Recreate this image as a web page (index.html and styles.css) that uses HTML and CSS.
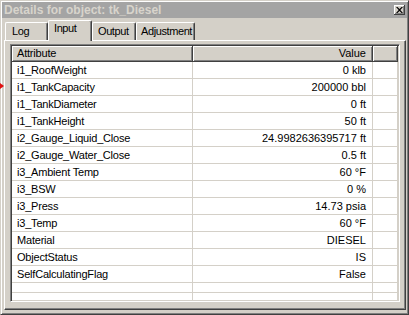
FILE: index.html
```html
<!DOCTYPE html>
<html lang="en">
<head>
  <meta charset="UTF-8">
  <title>Details for object: tk_Diesel</title>
  <link rel="stylesheet" href="styles.css">
</head>
<body>
  <div class="window">
    <!-- Title bar -->
    <div class="titlebar">
      <span class="title">Details for object: tk_Diesel</span>
      <div class="close">
        <svg width="7" height="6" viewBox="0 0 7 6">
          <path d="M0 0h1.5l2 2 2-2H7L4.3 3 7 6H5.5l-2-2-2 2H0l2.7-3z" fill="#000"/>
        </svg>
      </div>
    </div>

    <!-- Tabs -->
    <div class="tabs">
      <div class="tab tab-log">Log</div>
      <div class="tab tab-input active">Input</div>
      <div class="tab tab-output">Output</div>
      <div class="tab tab-adjust">Adjustment</div>
    </div>

    <!-- Tab page -->
    <div class="panel">
      <div class="grid">
        <div class="row head">
          <div class="cell">Attribute</div>
          <div class="cell value">Value</div>
          <div class="cell"></div>
        </div>
        <div class="row"><div class="cell">i1_RoofWeight</div><div class="cell value">0 klb</div><div class="cell"></div></div>
        <div class="row"><div class="cell">i1_TankCapacity</div><div class="cell value">200000 bbl</div><div class="cell"></div></div>
        <div class="row"><div class="cell">i1_TankDiameter</div><div class="cell value">0 ft</div><div class="cell"></div></div>
        <div class="row"><div class="cell">i1_TankHeight</div><div class="cell value">50 ft</div><div class="cell"></div></div>
        <div class="row"><div class="cell">i2_Gauge_Liquid_Close</div><div class="cell value">24.9982636395717 ft</div><div class="cell"></div></div>
        <div class="row"><div class="cell">i2_Gauge_Water_Close</div><div class="cell value">0.5 ft</div><div class="cell"></div></div>
        <div class="row"><div class="cell">i3_Ambient Temp</div><div class="cell value">60 °F</div><div class="cell"></div></div>
        <div class="row"><div class="cell">i3_BSW</div><div class="cell value">0 %</div><div class="cell"></div></div>
        <div class="row"><div class="cell">i3_Press</div><div class="cell value">14.73 psia</div><div class="cell"></div></div>
        <div class="row"><div class="cell">i3_Temp</div><div class="cell value">60 °F</div><div class="cell"></div></div>
        <div class="row"><div class="cell">Material</div><div class="cell value">DIESEL</div><div class="cell"></div></div>
        <div class="row"><div class="cell">ObjectStatus</div><div class="cell value">IS</div><div class="cell"></div></div>
        <div class="row"><div class="cell">SelfCalculatingFlag</div><div class="cell value">False</div><div class="cell"></div></div>
        <div class="row short"><div class="cell"></div><div class="cell value"></div><div class="cell"></div></div>
        <div class="row rest"><div class="cell"></div><div class="cell value"></div><div class="cell"></div></div>
      </div>
    </div>
  </div>

  <!-- marker from the window behind -->
  <span class="marker"></span>
</body>
</html>
```

FILE: styles.css
```css
* {
  margin: 0;
  padding: 0;
  box-sizing: border-box;
}

body {
  background: #d4d0c8;
  font-family: "Liberation Sans", Arial, sans-serif;
  font-size: 11px;
  color: #000;
}

/* Window frame */
.window {
  width: 409px;
  height: 315px;
  background: #d4d0c8;
  border-top: 1px solid #d4d0c8;
  border-left: 1px solid #d4d0c8;
  border-right: 1px solid #404040;
  border-bottom: 1px solid #404040;
  box-shadow: inset 1px 1px #ffffff, inset -1px -1px #808080;
  padding: 1px;
  display: flex;
  flex-direction: column;
}

/* Title bar */
.titlebar {
  height: 16px;
  background: #a4a4a4;
  display: flex;
  align-items: center;
  justify-content: space-between;
  padding: 0 2px 0 2px;
}

.title {
  font-weight: bold;
  font-size: 12px;
  color: #d8d4cc;
  line-height: 16px;
}

.close {
  width: 11px;
  height: 10px;
  background: #d4d0c8;
  border-right: 1px solid #404040;
  border-bottom: 1px solid #404040;
  box-shadow: inset 1px 1px #ffffff, inset -1px -1px #808080;
  display: flex;
  align-items: center;
  justify-content: center;
}

/* Tabs */
.tabs {
  height: 22px;
  display: flex;
  align-items: flex-end;
  padding-left: 3px;
}

.tab {
  height: 18px;
  line-height: 16px;
  padding-left: 5px;
  letter-spacing: -0.4px;
  border-top: 1px solid #ffffff;
  border-left: 1px solid #ffffff;
  border-right: 1px solid #404040;
  border-radius: 2px 2px 0 0;
  box-shadow: inset -1px 0 #808080;
  white-space: nowrap;
  overflow: hidden;
}

.tab-log { width: 43px; padding-left: 6px; }
.tab-input { width: 44px; }
.tab-output { width: 44px; }
.tab-adjust { width: 59px; padding-left: 4px; }

.tab.active {
  height: 21px;
  line-height: 14px;
  position: relative;
  z-index: 1;
  margin-bottom: -1px;
  background: #d4d0c8;
}

/* Tab page */
.panel {
  flex: 1;
  margin: 0 1px 3px 2px;
  border-top: 1px solid #ffffff;
  border-left: 1px solid #ffffff;
  border-right: 1px solid #404040;
  border-bottom: 1px solid #404040;
  box-shadow: inset -1px -1px #808080;
  padding: 3px 0 0 5px;
}

/* Attribute grid */
.grid {
  width: 390px;
  height: 258px;
  border-top: 1px solid #808080;
  border-left: 1px solid #808080;
  border-right: 1px solid #ffffff;
  border-bottom: 1px solid #ffffff;
  box-shadow: inset 1px 1px #404040, inset -1px -1px #d4d0c8;
  padding: 1px;
  overflow: hidden;
}

.row {
  display: grid;
  grid-template-columns: 181px 180px 25px;
  height: 17px;
  background: #ffffff;
}

.cell {
  border-right: 1px solid #d4d0c8;
  border-bottom: 1px solid #d4d0c8;
  padding: 1px 5px 0 5px;
  line-height: 15px;
  white-space: nowrap;
  overflow: hidden;
}

.cell:first-child {
  letter-spacing: -0.2px;
}

.cell.value {
  text-align: right;
  padding-right: 6px;
}

.row.head {
  height: 16px;
  background: #d4d0c8;
}

.row.head .cell {
  border-right: 1px solid #404040;
  border-bottom: 1px solid #404040;
  box-shadow: inset 1px 1px #ffffff, inset -1px -1px #808080;
  padding-top: 0;
}

.row.short {
  height: 10px;
}

.row.rest {
  height: 8px;
}

/* red pointer peeking from behind the window */
.marker {
  position: absolute;
  left: 0;
  top: 83px;
  width: 0;
  height: 0;
  border-top: 3px solid transparent;
  border-bottom: 3px solid transparent;
  border-left: 4px solid #e01010;
}
```
